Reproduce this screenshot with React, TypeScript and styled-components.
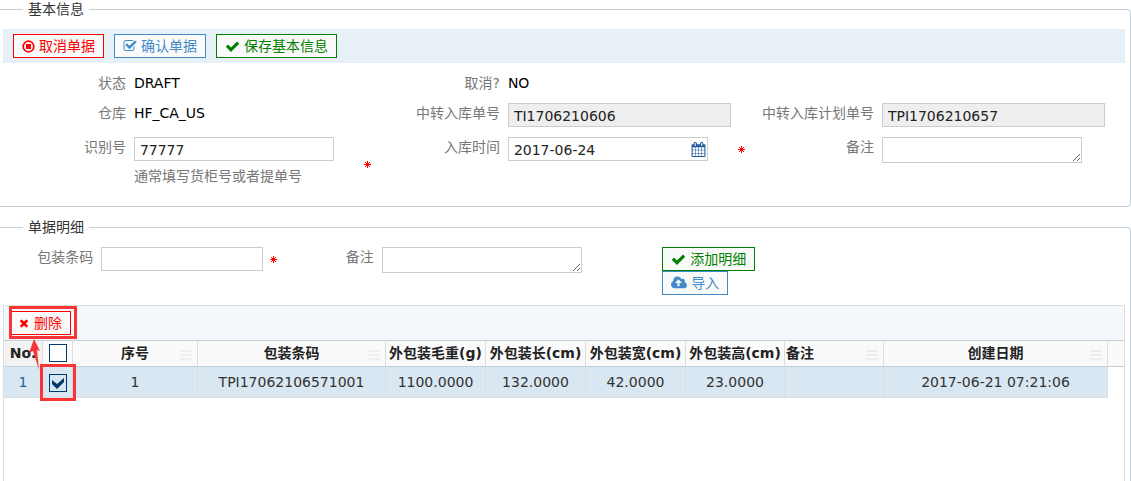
import React from "react";
import styled, { createGlobalStyle, css } from "styled-components";

const GlobalStyle = createGlobalStyle`
  *, *::before, *::after { box-sizing: border-box; }
  body {
    margin: 0;
    background: #fff;
    color: #222;
    font: 14px/20px "DejaVu Sans", "Noto Sans CJK SC", sans-serif;
  }
`;

const Page = styled.main`
  display: flex;
  flex-direction: column;
  gap: 11px;
  height: 100vh;
  overflow: hidden;
`;

const Section = styled.fieldset<{ $grow?: boolean }>`
  min-width: 0;
  margin: 0;
  padding: 10px 5px ${(p) => (p.$grow ? 0 : 15)}px 3px;
  border: 1px solid #c5d0d6;
  border-left: 0;
  border-radius: 0 4px 4px 0;
  ${(p) =>
    p.$grow &&
    css`
      flex: 1 0 auto;
      border-bottom: 0;
      border-radius: 0 4px 0 0;
    `}
`;

const Legend = styled.legend`
  height: 19px;
  margin-left: 20px;
  padding: 0 5px;
  line-height: 19px;
  color: #333;
`;

const ActionBar = styled.div`
  display: flex;
  gap: 10px;
  padding: 5px 10px;
  background: #e8f0f7;
`;

const Button = styled.button<{ $tone: string }>`
  display: inline-flex;
  align-items: center;
  gap: 4px;
  height: 24px;
  padding: 0 8px;
  border: 1px solid ${(p) => p.$tone};
  background: #fafafa;
  color: ${(p) => p.$tone};
  font: inherit;
  white-space: nowrap;
  cursor: pointer;
`;

const Form = styled.div<{ $columns: number }>`
  display: grid;
  grid-template-columns: repeat(${(p) => p.$columns}, 1fr);
  row-gap: 10px;
  padding-top: ${(p) => (p.$columns === 3 ? 10 : 0)}px;
`;

const Field = styled.div<{ $start?: boolean }>`
  display: grid;
  grid-template-columns: 35% 1fr;
  align-items: start;
  ${(p) => p.$start && "grid-column-start: 1;"}
`;

const Label = styled.label`
  padding-right: 8px;
  color: #777;
  text-align: right;
  white-space: nowrap;
`;

const Value = styled.output`
  color: #000;
`;

const Control = styled.div<{ $gap?: number }>`
  display: flex;
  align-items: center;
  gap: ${(p) => p.$gap ?? 0}px;
`;

const Stack = styled.div`
  display: flex;
  flex-direction: column;
  align-items: flex-start;
`;

const Hint = styled.span`
  height: 30px;
  padding-top: 5px;
  color: #777;
`;

const TextInput = styled.input<{ $width: number }>`
  width: ${(p) => p.$width}px;
  height: 24px;
  padding: 1px 5px 0;
  border: 1px solid #ccc;
  border-radius: 0;
  background: #fff;
  color: #222;
  font: inherit;
  outline: none;
  &:read-only {
    background: #eee;
  }
`;

const DateBox = styled.div`
  display: flex;
  align-items: center;
  width: 200px;
  height: 24px;
  padding-right: 1px;
  border: 1px solid #ccc;
  color: #1c5a9c;
`;

const DateInput = styled.input`
  flex: 1;
  min-width: 0;
  padding: 1px 5px 0;
  border: 0;
  background: none;
  color: #222;
  font: inherit;
  outline: none;
`;

const TextArea = styled.textarea`
  display: block;
  width: 200px;
  height: 26px;
  padding: 2px 5px;
  border: 1px solid #ccc;
  font: inherit;
  outline: none;
  resize: both;
`;

const Panel = styled.div`
  margin-top: 10px;
  height: 200px;
  border: 1px solid #ddd;
  border-bottom: 0;
`;

const PanelBar = styled.div`
  display: flex;
  align-items: center;
  height: 34px;
  padding: 0 5px;
  background: #f3f8fc;
`;

const Marked = styled.div`
  position: relative;
  display: inline-flex;
  vertical-align: middle;
`;

const Mark = styled.span<{ $pad: string }>`
  position: absolute;
  inset: ${(p) => p.$pad};
  border: 3px solid #fa3434;
  pointer-events: none;
`;

const Arrow = styled.svg`
  position: absolute;
  left: 20px;
  top: 28px;
  z-index: 1;
  pointer-events: none;
`;

const Table = styled.table`
  width: 100%;
  table-layout: fixed;
  border-collapse: separate;
  border-spacing: 0;
`;

const Th = styled.th<{ $align?: string; $shade?: boolean }>`
  position: relative;
  height: 27px;
  padding: 0 1px 2px;
  border: solid #c5d0d6;
  border-width: 1px 0;
  border-right: 1px solid #ddd;
  background: ${(p) => (p.$shade ? "#f2f2f2" : "#fafafa")};
  text-align: ${(p) => p.$align ?? "center"};
  line-height: 20px;
  white-space: nowrap;
  &:last-child {
    border-right: 0;
  }
`;

const Grip = styled.span`
  position: absolute;
  right: 5px;
  top: 9px;
  width: 12px;
  height: 10px;
  background: repeating-linear-gradient(#eee 0 2px, transparent 2px 4px);
`;

const Td = styled.td<{ $link?: boolean }>`
  height: 31px;
  padding: 0 1px;
  border-right: 1px solid #ddd;
  border-bottom: 1px solid #ddd;
  background: #d9e7f2;
  color: ${(p) => (p.$link ? "#2a6496" : "#333")};
  text-align: center;
  white-space: nowrap;
  &:last-child {
    border: 0;
    background: none;
  }
`;

const Check = styled.input`
  appearance: none;
  display: block;
  width: 18px;
  height: 18px;
  margin: 0 auto;
  border: 1px solid #003a6a;
  background: #fff;
  &:checked {
    background: #d9e7f2
      url("data:image/svg+xml,%3Csvg xmlns='http://www.w3.org/2000/svg' viewBox='0 0 16 16'%3E%3Cpath d='M2 5l5 4 7-6v4l-7 7-5-5z' fill='%23003a6a'/%3E%3C/svg%3E")
      center / 16px;
  }
`;

const glyphs = {
  check:
    "M1671 566q0 40-28 68l-724 724-136 136q-28 28-68 28t-68-28l-136-136-362-362q-28-28-28-68t28-68l136-136q28-28 68-28t68 28l294 295 656-657q28-28 68-28t68 28l136 136q28 28 28 68z",
  times:
    "M1490 1322q0 40-28 68l-136 136q-28 28-68 28t-68-28l-294-294-294 294q-28 28-68 28t-68-28l-136-136q-28-28-28-68t28-68l294-294-294-294q-28-28-28-68t28-68l136-136q28-28 68-28t68 28l294 294 294-294q28-28 68-28t68 28l136 136q28 28 28 68t-28 68l-294 294 294 294q28 28 28 68z",
  checkSquare:
    "M1472 930v318q0 119-84.5 203.5t-203.5 84.5h-832q-119 0-203.5-84.5t-84.5-203.5v-832q0-119 84.5-203.5t203.5-84.5h832q63 0 117 25 15 7 18 23 3 17-9 29l-49 49q-10 10-23 10-3 0-9-2-23-6-45-6h-832q-66 0-113 47t-47 113v832q0 66 47 113t113 47h832q66 0 113-47t47-113v-254q0-13 9-22l64-64q10-10 23-10 6 0 12 3 20 8 20 29zm231-489l-814 814q-24 24-57 24t-57-24l-430-430q-24-24-24-57t24-57l110-110q24-24 57-24t57 24l263 263 647-647q24-24 57-24t57 24l110 110q24 24 24 57t-24 57z",
  cloudUpload:
    "M1280 864q0-14-9-23l-352-352q-9-9-23-9t-23 9l-351 351q-10 12-10 24 0 14 9 23t23 9h224v352q0 13 9.5 22.5t22.5 9.5h192q13 0 22.5-9.5t9.5-22.5v-352h224q13 0 22.5-9.5t9.5-22.5zm640 288q0 159-112.5 271.5t-271.5 112.5h-1088q-185 0-316.5-131.5t-131.5-316.5q0-130 70-240t188-165q-2-30-2-43 0-212 150-362t362-150q156 0 285.5 87t188.5 231q71-62 166-62 106 0 181 75t75 181q0 76-41 138 130 31 213.5 135.5t83.5 238.5z",
  calendar:
    "M192 1664h288v-288h-288v288zm352 0h320v-288h-320v288zm-352-352h288v-320h-288v320zm352 0h320v-320h-320v320zm-352-384h288v-288h-288v288zm736 736h320v-288h-320v288zm-384-736h320v-288h-320v288zm768 736h288v-288h-288v288zm-384-352h320v-320h-320v320zm-352-864v-288q0-13-9.5-22.5t-22.5-9.5h-64q-13 0-22.5 9.5t-9.5 22.5v288q0 13 9.5 22.5t22.5 9.5h64q13 0 22.5-9.5t9.5-22.5zm736 864h288v-320h-288v320zm-384-384h320v-288h-320v288zm384 0h288v-288h-288v288zm32-480v-288q0-13-9.5-22.5t-22.5-9.5h-64q-13 0-22.5 9.5t-9.5 22.5v288q0 13 9.5 22.5t22.5 9.5h64q13 0 22.5-9.5t9.5-22.5zm384-64v1280q0 52-38 90t-90 38h-1408q-52 0-90-38t-38-90v-1280q0-52 38-90t90-38h128v-96q0-66 47-113t113-47h64q66 0 113 47t47 113v96h384v-96q0-66 47-113t113-47h64q66 0 113 47t47 113v96h128q52 0 90 38t38 90z",
};

const Icon = ({ name, size, wide }: { name: keyof typeof glyphs; size: number; wide?: boolean }) => (
  <svg width={size} height={size} viewBox={wide ? "0 0 1920 1792" : "0 0 1792 1792"} fill="currentColor" aria-hidden>
    <path d={glyphs[name]} />
  </svg>
);

const RequiredIcon = () => (
  <svg width="7" height="7" viewBox="0 0 7 7" role="img" aria-label="*" shapeRendering="crispEdges">
    <path
      d="M3 0h1v7h-1zM0 3h7v1h-7zM2 2h3v3h-3zM1 1h1v1h-1zM5 1h1v1h-1zM1 5h1v1h-1zM5 5h1v1h-1z"
      fill="#f00"
    />
  </svg>
);

const StopIcon = () => (
  <svg width="13" height="13" viewBox="0 0 13 13" aria-hidden>
    <circle cx="6.5" cy="6.5" r="5.3" fill="none" stroke="currentColor" strokeWidth="1.7" />
    <rect x="4" y="4" width="5" height="5" fill="currentColor" />
  </svg>
);

const columns: { label: string; width: number; align?: string; grip?: boolean }[] = [
  { label: "序号", width: 125, grip: true },
  { label: "包装条码", width: 188, grip: true },
  { label: "外包装毛重(g)", width: 100 },
  { label: "外包装长(cm)", width: 100 },
  { label: "外包装宽(cm)", width: 100 },
  { label: "外包装高(cm)", width: 99 },
  { label: "备注", width: 99, align: "left", grip: true },
  { label: "创建日期", width: 224, grip: true },
];

const row = ["1", "TPI17062106571001", "1100.0000", "132.0000", "42.0000", "23.0000", "", "2017-06-21 07:21:06"];

export default function App() {
  return (
    <Page>
      <GlobalStyle />
      <Section>
        <Legend>基本信息</Legend>
        <ActionBar>
          <Button type="button" $tone="#f00"><StopIcon />取消单据</Button>
          <Button type="button" $tone="#428bca"><Icon name="checkSquare" size={14} />确认单据</Button>
          <Button type="button" $tone="#008000"><Icon name="check" size={15} />保存基本信息</Button>
        </ActionBar>
        <Form $columns={3}>
          <Field>
            <Label htmlFor="status">状态</Label>
            <Value id="status">DRAFT</Value>
          </Field>
          <Field>
            <Label htmlFor="cancelled">取消?</Label>
            <Value id="cancelled">NO</Value>
          </Field>
          <Field $start>
            <Label htmlFor="warehouse">仓库</Label>
            <Value id="warehouse">HF_CA_US</Value>
          </Field>
          <Field>
            <Label htmlFor="order">中转入库单号</Label>
            <TextInput id="order" $width={223} readOnly value="TI1706210606" />
          </Field>
          <Field>
            <Label htmlFor="plan">中转入库计划单号</Label>
            <TextInput id="plan" $width={223} readOnly value="TPI1706210657" />
          </Field>
          <Field $start>
            <Label htmlFor="ident">识别号</Label>
            <Control $gap={30}>
              <Stack>
                <TextInput id="ident" $width={200} defaultValue="77777" />
                <Hint>通常填写货柜号或者提单号</Hint>
              </Stack>
              <RequiredIcon />
            </Control>
          </Field>
          <Field>
            <Label htmlFor="date">入库时间</Label>
            <Control $gap={30}>
              <DateBox>
                <DateInput id="date" defaultValue="2017-06-24" />
                <Icon name="calendar" size={15} />
              </DateBox>
              <RequiredIcon />
            </Control>
          </Field>
          <Field>
            <Label htmlFor="remark">备注</Label>
            <TextArea id="remark" />
          </Field>
        </Form>
      </Section>

      <Section $grow>
        <Legend>单据明细</Legend>
        <Form $columns={4}>
          <Field>
            <Label htmlFor="barcode">包装条码</Label>
            <Control $gap={7}>
              <TextInput id="barcode" $width={162} />
              <RequiredIcon />
            </Control>
          </Field>
          <Field>
            <Label htmlFor="item-remark">备注</Label>
            <TextArea id="item-remark" />
          </Field>
          <Field>
            <span />
            <Stack>
              <Button type="button" $tone="#008000"><Icon name="check" size={15} />添加明细</Button>
              <Button type="button" $tone="#428bca"><Icon name="cloudUpload" size={16} wide />导入</Button>
            </Stack>
          </Field>
        </Form>
        <Panel>
          <PanelBar>
            <Marked>
              <Button type="button" $tone="#f00"><Icon name="times" size={12} />删除</Button>
              <Mark $pad="-5px -6px -4px 0" />
              <Arrow width="12" height="32" viewBox="0 0 12 32">
                <path d="M5 0L11 12L8 11L10 31L4 12L0 14z" fill="#fa3434" />
              </Arrow>
            </Marked>
          </PanelBar>
          <Table>
            <colgroup>
              <col style={{ width: 39 }} />
              <col style={{ width: 30 }} />
              {columns.map((c) => <col key={c.label} style={{ width: c.width }} />)}
              <col />
            </colgroup>
            <thead>
              <tr>
                <Th $shade>No.</Th>
                <Th><Check type="checkbox" aria-label="全选" /></Th>
                {columns.map((c) => (
                  <Th key={c.label} $align={c.align}>{c.label}{c.grip && <Grip />}</Th>
                ))}
                <Th />
              </tr>
            </thead>
            <tbody>
              <tr>
                <Td $link>1</Td>
                <Td>
                  <Marked>
                    <Check type="checkbox" defaultChecked aria-label="1" />
                    <Mark $pad="-10px -9px -9px -9px" />
                  </Marked>
                </Td>
                {row.map((v, i) => <Td key={i}>{v}</Td>)}
                <Td />
              </tr>
            </tbody>
          </Table>
        </Panel>
      </Section>
    </Page>
  );
}
